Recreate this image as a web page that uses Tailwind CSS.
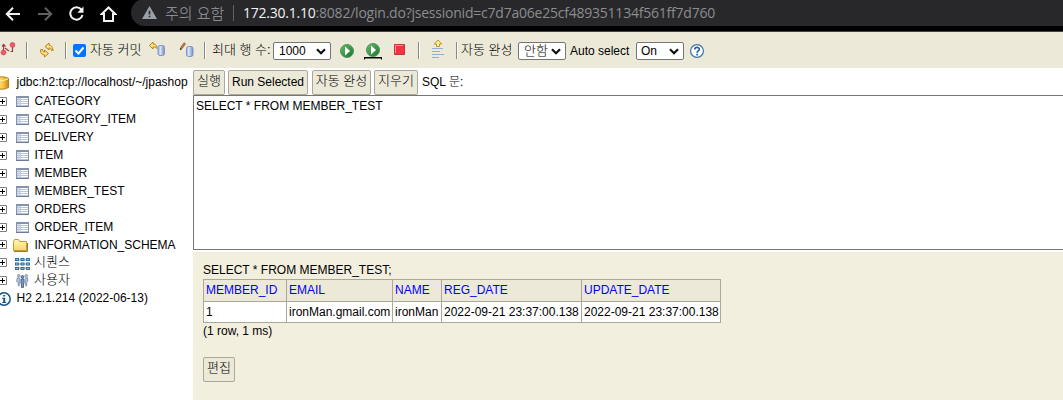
<!DOCTYPE html>
<html lang="ko">
<head>
    <meta charset="UTF-8">
    <meta name="viewport" content="width=device-width, initial-scale=1.0">
    <title>H2 Console</title>
    <script src="https://cdn.jsdelivr.net/npm/@tailwindcss/browser@4"></script>
</head>
<body class="h-[400px] overflow-hidden bg-white text-black text-[12px] leading-[18px] font-['Liberation_Sans','Noto_Sans_CJK_KR',sans-serif]">

<!-- Shared icons -->
<svg class="absolute w-0 h-0">
    <symbol id="plus" viewBox="0 0 9 9">
        <path d="M.5.5h8v8h-8z" fill="#fff" stroke="#808080"/>
        <path d="M2 4.5h5M4.5 2v5" stroke="#000"/>
    </symbol>
    <symbol id="table" viewBox="0 0 13 11">
        <path d="M0 0h13v11H0z" fill="#8492b0"/>
        <path d="M1 2h11v8H1z" fill="#fff"/>
        <path d="M1 2h3v8H1z" fill="#d8dfeb"/>
        <path d="M1 3.5h11M1 5.5h11M1 7.5h11M1 9.5h11" stroke="#b9c4d8"/>
        <path d="M4.5 2v8" stroke="#c6cfdf"/>
        <path d="M0 10.5h13" stroke="#6c7a9b"/>
    </symbol>
    <symbol id="chevron" viewBox="0 0 10 7">
        <path d="M1 1.3l4 4 4-4" fill="none" stroke="#111" stroke-width="2.2"/>
    </symbol>
    <linearGradient id="green" x1="0" y1="0" x2="1" y2="1">
        <stop offset="0" stop-color="#6dbb6d"/><stop offset="1" stop-color="#17722d"/>
    </linearGradient>
    <linearGradient id="cyl" x1="0" y1="0" x2="1" y2="0">
        <stop offset="0" stop-color="#8fa6d8"/><stop offset=".35" stop-color="#dce7fa"/><stop offset="1" stop-color="#6e89c5"/>
    </linearGradient>
    <linearGradient id="gold" x1="0" y1="0" x2="1" y2="0">
        <stop offset="0" stop-color="#fff0a0"/><stop offset=".6" stop-color="#f3c443"/><stop offset="1" stop-color="#c8860c"/>
    </linearGradient>
    <linearGradient id="folder" x1="0" y1="0" x2="0" y2="1">
        <stop offset="0" stop-color="#fff6b8"/><stop offset="1" stop-color="#f6d766"/>
    </linearGradient>
    <symbol id="run" viewBox="0 0 14 14">
        <circle cx="7" cy="7" r="6.5" fill="url(#green)" stroke="#4a9758"/>
        <path d="M5 2.5L10 7 5 11.5z" fill="#fff"/>
    </symbol>
</svg>

<!-- Browser bar -->
<header class="flex h-8 bg-black border-b border-[#45433e]">
    <div class="flex w-[131px] shrink-0 h-[27px] items-center pl-[5px]">
        <svg class="w-4 h-[14px] mr-4" viewBox="0 0 16 14" fill="none" stroke="#f1f3f4" stroke-width="2"><path d="M8 .8L1.8 7 8 13.2M2 7h13"/></svg>
        <svg class="w-4 h-[14px] mr-4" viewBox="0 0 16 14" fill="none" stroke="#5f6164" stroke-width="2"><path d="M8 .8L14.2 7 8 13.2M14 7H1"/></svg>
        <svg class="w-[15px] h-[15px] mr-[16px]" viewBox="0 0 15 15"><path d="M12.3 3.5A6.2 6.2 0 1 0 13.5 9" fill="none" stroke="#f1f3f4" stroke-width="2"/><path d="M14.5.5v6.2H8.3z" fill="#f1f3f4"/></svg>
        <svg class="w-[17px] h-[16px]" viewBox="0 0 17 16" fill="none" stroke="#f1f3f4" stroke-width="2"><path d="M8.5 1.5L1.8 8H4v7h9V8h2.2z"/></svg>
    </div>
    <div class="flex grow h-[27px] items-center bg-[#28282a] rounded-l-[14px] -mt-px pl-[11px] text-[15px] text-[#9aa0a6] whitespace-nowrap">
        <svg class="w-[15px] h-[13px] mr-[8px] shrink-0" viewBox="0 0 15 13"><path d="M7.5 0L15 13H0z" fill="#9aa0a6"/><path d="M6.7 4.8h1.6v3.7H6.7zM6.7 9.7h1.6v1.6H6.7z" fill="#28282a"/></svg>
        <span class="w-[68px] shrink-0 font-light text-[15px] font-['Noto_Sans_CJK_KR',sans-serif]">주의 요함</span>
        <span class="w-px h-4 bg-[#5f6368] mr-[9px] shrink-0"></span>
        <span class="text-[14px] tracking-[-0.225px] font-['Open_Sans',sans-serif] text-[#8b8d90]"><span class="text-[#f1f3f4]">172.30.1.10</span>:8082/login.do?jsessionid=c7d7a06e25cf489351134f561ff7d760</span>
    </div>
</header>

<!-- Toolbar -->
<div class="flex items-center h-9 bg-[#ece9d8] whitespace-nowrap">
    <div class="w-[26px] shrink-0">
        <svg class="w-4 h-[14px] -mt-[2px]" viewBox="0 0 16 14"><path d="M3.500 10V2.500M2 4.500l1.500-2 2 2M5 6l4 3M12.500 3v7M10.500 9.500h2" fill="none" stroke="#9d3a42" stroke-width="1.200"/><circle cx="3.500" cy="10.500" r="2.400" fill="#ee5b6a" stroke="#d43c50" stroke-width=".7"/><circle cx="12.500" cy="3" r="2.400" fill="#ee5b6a" stroke="#d43c50" stroke-width=".7"/></svg>
    </div>
    <div class="w-[13px] shrink-0"><div class="w-[2px] h-[17px] border-l border-[#8c8a80] bg-white"></div></div>
    <div class="w-[26px] shrink-0">
        <svg class="w-4 h-4 -mt-px" viewBox="0 0 16 16" fill="#fbe08a" stroke="#b98308" stroke-linejoin="round"><path d="M6 4.500L10 1v2c2 .3 3.500 1.500 3.500 4.500l1 .5-2 .5C12 6.500 11.500 6 10 6v2z"/><path d="M9.500 11.500l-4 3.500v-2C3.500 12.700 1.500 11.500 1.500 8.500L1 8l2.500-.5C4 9.500 4 10 5.500 10V8z"/></svg>
    </div>
    <div class="w-[8px] shrink-0"><div class="w-[2px] h-[17px] border-l border-[#8c8a80] bg-white"></div></div>
    <div class="w-[17px] shrink-0">
        <svg class="w-[13px] h-[13px] mt-px" viewBox="0 0 13 13"><rect width="13" height="13" rx="2" fill="#0075ff"/><path d="M2.500 6.500l3 3 5-6" fill="none" stroke="#fff" stroke-width="2"/></svg>
    </div>
    <span class="w-[58px] shrink-0 text-[13px] font-light">자동 커밋</span>
    <div class="w-[31px] shrink-0">
        <svg class="w-[18px] h-4 -mt-[2px]" viewBox="0 0 18 16"><path d="M1.500 4.500L5 1v2c2.500 0 4 1 4 4.500C8 6 7 6 5 6v2z" fill="#fbe08a" stroke="#b98308"/><rect x="10" y="4.500" width="6.500" height="10" rx="2" fill="url(#cyl)" stroke="#8195c6"/></svg>
    </div>
    <div class="w-[25px] shrink-0">
        <svg class="w-4 h-4 -mt-px" viewBox="0 0 16 16"><path d="M1.500 7.500L2 5 5 .8l1.500 1L3.500 6z" fill="#c87a4b" stroke="#8b5a3a" stroke-width=".8"/><path d="M1 8.300l.5-2.300 1.500 1z" fill="#222"/><rect x="7.500" y="4.500" width="6.500" height="10" rx="2" fill="url(#cyl)" stroke="#8195c6"/></svg>
    </div>
    <div class="w-[8px] shrink-0"><div class="w-[2px] h-[17px] border-l border-[#8c8a80] bg-white"></div></div>
    <span class="w-[61px] shrink-0 text-[13px] font-light">최대 행 수:</span>
    <div class="flex w-[58px] h-[18px] mt-[2px] mr-[9px] shrink-0 items-center justify-between pl-[5px] pr-1 bg-white border border-[#767676] rounded-xs">1000<svg class="w-[10px] h-[7px]"><use href="#chevron"/></svg></div>
    <svg class="w-[14px] h-[14px] mt-[2px] mr-[10px] shrink-0"><use href="#run"/></svg>
    <svg class="w-[18px] h-[17px] mt-[3px] mr-[12px] shrink-0" viewBox="0 0 18 17"><use href="#run" x="2" y="0" width="14" height="14"/><path d="M.500 16.500v-2h17v2" fill="none" stroke="#000"/><path d="M0 15h18" stroke="#000"/></svg>
    <svg class="w-[11px] h-[11px] -mt-px mr-[13px] shrink-0" viewBox="0 0 11 11"><path d="M.500.500h10v10H.500z" fill="#f33343" stroke="#c73540"/><path d="M1.500 9V1.500H9" fill="none" stroke="#fa9098"/></svg>
    <div class="w-[13px] shrink-0"><div class="w-[2px] h-[17px] border-l border-[#8c8a80] bg-white"></div></div>
    <div class="w-[25px] shrink-0">
        <svg class="w-[14px] h-[19px] -mt-[3px]" viewBox="0 0 14 19"><path d="M7 1l3.700 4H8.500v2.500h-3V5H3.300z" fill="#fff0b0" stroke="#c7921a"/><path d="M1 9.500h11M1 12.500h8M1 15.500h12M1 18.500h7" stroke="#9aabd0"/></svg>
    </div>
    <div class="w-[5px] shrink-0"><div class="w-[2px] h-[17px] border-l border-[#8c8a80] bg-white"></div></div>
    <span class="w-[57px] shrink-0 text-[13px] font-light">자동 완성</span>
    <div class="flex w-[48px] h-[18px] mt-[2px] mr-1 shrink-0 items-center justify-between pl-[5px] pr-1 bg-white border border-[#767676] rounded-xs text-[13px] font-light">안함<svg class="w-[10px] h-[7px]"><use href="#chevron"/></svg></div>
    <span class="w-[66px] pt-px shrink-0">Auto select</span>
    <div class="flex w-[48px] h-[18px] mt-[2px] mr-[6px] shrink-0 items-center justify-between pl-1 pr-1 bg-white border border-[#767676] rounded-xs">On<svg class="w-[10px] h-[7px]"><use href="#chevron"/></svg></div>
    <svg class="w-[14px] h-[14px] mt-[2px] shrink-0" viewBox="0 0 14 14"><circle cx="7" cy="7" r="6.400" fill="#fff" stroke="#3d72a6" stroke-width="1.200"/><path d="M4.800 5.500C4.800 2.600 9.300 2.700 9.300 5.300 9.300 7 7.100 6.800 7.100 8.700M7.100 9.800v1.800" fill="none" stroke="#2461a0" stroke-width="1.700"/></svg>
</div>

<div class="flex h-[332px]">
    <!-- Database tree -->
    <nav class="w-[193px] shrink-0 pt-1 overflow-hidden whitespace-nowrap">
        <div class="flex h-5 pb-px items-center">
            <svg class="w-[9px] h-[14px] mt-[2px] mr-[7.5px]" viewBox="0 0 9 14"><path d="M-4 2.500Q2 -1 8.500 2.500v9Q2 15-4 11.500z" fill="url(#gold)" stroke="#b67d11"/><path d="M-3 3.500Q3 6 8 3" fill="none" stroke="#fff3b0"/></svg>
            jdbc:h2:tcp://localhost/~/jpashop
        </div>
        <div class="flex h-[18px] items-center"><svg class="w-[9px] h-[9px] -ml-[2px] mr-[9px]"><use href="#plus"/></svg><svg class="w-[13px] h-[11px] mr-[5.500px]"><use href="#table"/></svg>CATEGORY</div>
        <div class="flex h-[18px] items-center"><svg class="w-[9px] h-[9px] -ml-[2px] mr-[9px]"><use href="#plus"/></svg><svg class="w-[13px] h-[11px] mr-[5.500px]"><use href="#table"/></svg>CATEGORY_ITEM</div>
        <div class="flex h-[18px] items-center"><svg class="w-[9px] h-[9px] -ml-[2px] mr-[9px]"><use href="#plus"/></svg><svg class="w-[13px] h-[11px] mr-[5.500px]"><use href="#table"/></svg>DELIVERY</div>
        <div class="flex h-[18px] items-center"><svg class="w-[9px] h-[9px] -ml-[2px] mr-[9px]"><use href="#plus"/></svg><svg class="w-[13px] h-[11px] mr-[5.500px]"><use href="#table"/></svg>ITEM</div>
        <div class="flex h-[18px] items-center"><svg class="w-[9px] h-[9px] -ml-[2px] mr-[9px]"><use href="#plus"/></svg><svg class="w-[13px] h-[11px] mr-[5.500px]"><use href="#table"/></svg>MEMBER</div>
        <div class="flex h-[18px] items-center"><svg class="w-[9px] h-[9px] -ml-[2px] mr-[9px]"><use href="#plus"/></svg><svg class="w-[13px] h-[11px] mr-[5.500px]"><use href="#table"/></svg>MEMBER_TEST</div>
        <div class="flex h-[18px] items-center"><svg class="w-[9px] h-[9px] -ml-[2px] mr-[9px]"><use href="#plus"/></svg><svg class="w-[13px] h-[11px] mr-[5.500px]"><use href="#table"/></svg>ORDERS</div>
        <div class="flex h-[18px] items-center"><svg class="w-[9px] h-[9px] -ml-[2px] mr-[9px]"><use href="#plus"/></svg><svg class="w-[13px] h-[11px] mr-[5.500px]"><use href="#table"/></svg>ORDER_ITEM</div>
        <div class="flex h-[17px] items-center">
            <svg class="w-[9px] h-[9px] -ml-[2px] mr-[6px]"><use href="#plus"/></svg>
            <svg class="w-[15px] h-[13px] mt-[2px] mr-[6.500px]" viewBox="0 0 15 13"><path d="M.500 11.500v-9l1-2h4l1 2h7v9z" fill="url(#folder)" stroke="#c79a2b"/><path d="M1 12.500h13.500V4" fill="none" stroke="#9c7a2c"/></svg>
            INFORMATION_SCHEMA
        </div>
        <div class="flex h-[18px] items-center">
            <svg class="w-[9px] h-[9px] -ml-[2px] mr-[8px]"><use href="#plus"/></svg>
            <svg class="w-[15px] h-[12px] mt-[3px] mr-[4px]" viewBox="0 0 15 12">
                <path d="M0 2h15M0 6h15M0 10h15" stroke="#7fa5c4"/>
                <path d="M0 0h4v3H0zM5.500 0h4v3h-4zM11 0h4v3h-4zM0 4.500h4v3H0zM5.500 4.500h4v3h-4zM11 4.500h4v3h-4zM0 9h4v3H0zM5.500 9h4v3h-4zM11 9h4v3h-4z" fill="#3b7099"/>
                <path d="M1 1h2v1H1zM6.500 1h2v1h-2zM12 1h2v1h-2zM1 5.500h2v1H1zM6.500 5.500h2v1h-2zM12 5.500h2v1h-2zM1 10h2v1H1zM6.500 10h2v1h-2zM12 10h2v1h-2z" fill="#8bbcdc"/>
            </svg>
            <span class="text-[13px] font-light">시퀀스</span>
        </div>
        <div class="flex h-[18px] items-center">
            <svg class="w-[9px] h-[9px] -ml-[2px] mr-[9px]"><use href="#plus"/></svg>
            <svg class="w-[13px] h-[14px] mt-px mr-[5px]" viewBox="0 0 13 14">
                <g fill="#c3cee4" stroke="#6d80a8" stroke-width=".8"><circle cx="2.700" cy="1.700" r="1.200"/><circle cx="10.300" cy="1.700" r="1.200"/><path d="M1.300 3.800h2v8h-1V8.500L.600 7.500zM11.700 3.800h-2v8h1V8.500l1-1z"/></g>
                <g fill="#7d92bd" stroke="#44567f" stroke-width=".8"><circle cx="6.500" cy="3" r="1.500"/><path d="M4.900 5.200h3.200v4.300h-.6v4H5.500v-4h-.6z"/></g>
            </svg>
            <span class="text-[13px] font-light">사용자</span>
        </div>
        <div class="flex h-[18px] items-center">
            <svg class="w-[14px] h-[14px] mt-[2px] -ml-[3px] mr-[5.500px]" viewBox="0 0 14 14"><circle cx="7" cy="7" r="6.200" fill="#fff" stroke="#17578c" stroke-width="1.500"/><path d="M6.200 3h2v1.600h-2zM5.200 5.800h3v4.100h1V11H5.200V9.900h1V7h-1z" fill="#17578c"/></svg>
            H2 2.1.214 (2022-06-13)
        </div>
    </nav>

    <main class="grow flex flex-col">
        <!-- Query -->
        <div class="flex h-[27px] pt-[2px] whitespace-nowrap">
            <button class="w-8 h-[25px] pb-[3px] mr-[3px] bg-[#ece9d8] border border-[#aca899] rounded-xs text-[13px] font-light">실행</button>
            <button class="w-20 h-[25px] pb-[2px] mr-1 bg-[#ece9d8] border border-[#aca899] rounded-xs">Run Selected</button>
            <button class="w-[59px] h-[25px] pb-[3px] mr-[3px] bg-[#ece9d8] border border-[#aca899] rounded-xs text-[13px] font-light">자동 완성</button>
            <button class="w-[44px] h-[25px] pb-[3px] mr-1 bg-[#ece9d8] border border-[#aca899] rounded-xs text-[13px] font-light">지우기</button>
            <span class="pt-[3px]">SQL <span class="font-light">문:</span></span>
        </div>
        <div class="h-[155px] border border-r-0 border-[#767676] pl-[2px] pt-px">SELECT * FROM MEMBER_TEST</div>

        <!-- Result -->
        <div class="grow mt-[2px] bg-[#f3efde] pl-[10px] pt-[9px]">
            <p>SELECT * FROM MEMBER_TEST;</p>
            <table class="w-[518px] table-fixed border-collapse bg-white whitespace-nowrap">
                <tr class="h-[22px] bg-[#ece9d8] text-[#00f] text-left">
                    <th class="w-[83px] border border-[#aca899] pl-[2px] pb-[2px] font-normal">MEMBER_ID</th>
                    <th class="w-[106px] border border-[#aca899] pl-[2px] pb-[2px] font-normal">EMAIL</th>
                    <th class="w-[49px] border border-[#aca899] pl-[2px] pb-[2px] font-normal">NAME</th>
                    <th class="w-[140px] border border-[#aca899] pl-[2px] pb-[2px] font-normal">REG_DATE</th>
                    <th class="border border-[#aca899] pl-[2px] pb-[2px] font-normal">UPDATE_DATE</th>
                </tr>
                <tr class="h-[21px]">
                    <td class="border border-[#aca899] pl-[2px]">1</td>
                    <td class="border border-[#aca899] pl-[2px]">ironMan.gmail.com</td>
                    <td class="border border-[#aca899] pl-[2px]">ironMan</td>
                    <td class="border border-[#aca899] pl-[2px]">2022-09-21 23:37:00.138</td>
                    <td class="border border-[#aca899] pl-[2px]">2022-09-21 23:37:00.138</td>
                </tr>
            </table>
            <p class="-mt-px">(1 row, 1 ms)</p>
            <button class="w-8 h-[25px] pb-[3px] mt-[17px] bg-[#ece9d8] border border-[#aca899] rounded-xs text-[13px] font-light">편집</button>
        </div>
    </main>
</div>
</body>
</html>
